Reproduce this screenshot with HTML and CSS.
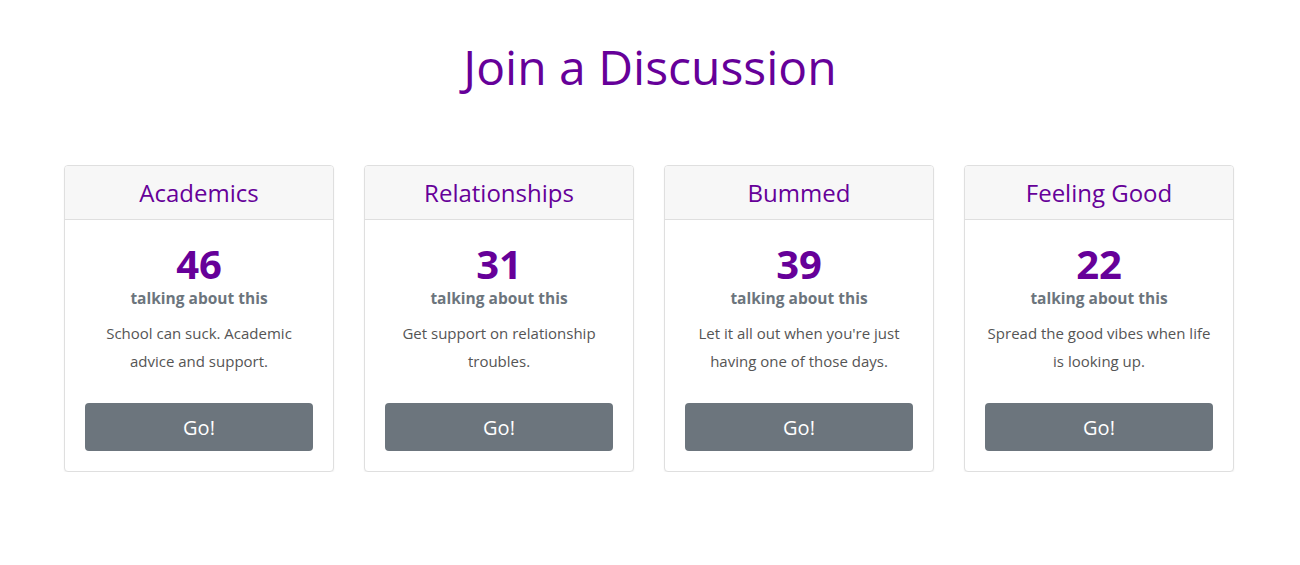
FILE: index.html
```html
<!DOCTYPE html>
<html lang="en">
<head>
<meta charset="utf-8">
<title>Join a Discussion</title>
<link rel="stylesheet" href="styles.css">
</head>
<body>
<main class="page">
  <h1 class="page-title">Join a Discussion</h1>
  <section class="cards">
    <article class="card">
      <header class="card-header"><h2 class="card-title">Academics</h2></header>
      <div class="card-body">
        <div class="count">46</div>
        <div class="count-label">talking about this</div>
        <p class="desc">School can suck. Academic advice and support.</p>
        <button class="btn">Go!</button>
      </div>
    </article>
    <article class="card">
      <header class="card-header"><h2 class="card-title">Relationships</h2></header>
      <div class="card-body">
        <div class="count">31</div>
        <div class="count-label">talking about this</div>
        <p class="desc">Get support on relationship troubles.</p>
        <button class="btn">Go!</button>
      </div>
    </article>
    <article class="card">
      <header class="card-header"><h2 class="card-title">Bummed</h2></header>
      <div class="card-body">
        <div class="count">39</div>
        <div class="count-label">talking about this</div>
        <p class="desc">Let it all out when you're just having one of those days.</p>
        <button class="btn">Go!</button>
      </div>
    </article>
    <article class="card">
      <header class="card-header"><h2 class="card-title">Feeling Good</h2></header>
      <div class="card-body">
        <div class="count">22</div>
        <div class="count-label">talking about this</div>
        <p class="desc">Spread the good vibes when life is looking up.</p>
        <button class="btn">Go!</button>
      </div>
    </article>
  </section>
</main>
</body>
</html>
```

FILE: styles.css
```css
* { box-sizing: border-box; }
html, body { margin: 0; padding: 0; background: #fff; }
body {
  font-family: "Open Sans", "Noto Sans", sans-serif;
  color: #212529;
}
.page {
  padding-top: 38px;
}
.page-title {
  margin: 0;
  text-align: center;
  font-size: 48px;
  line-height: 58px;
  font-weight: 400;
  color: #660099;
}
.cards {
  margin-top: 69px;
  padding-right: 2px;
  display: grid;
  grid-template-columns: repeat(4, 270px);
  column-gap: 30px;
  justify-content: center;
}
.card {
  border: 1px solid #dfdfdf;
  border-radius: 4px;
  background: #fff;
  box-shadow: 0 1px 2px rgba(0,0,0,0.06);
  display: flex;
  flex-direction: column;
  overflow: hidden;
}
.card-header {
  background: #f7f7f7;
  border-bottom: 1px solid #dfdfdf;
  padding: 13px 20px 11px;
  text-align: center;
}
.card-title {
  margin: 0;
  font-size: 24px;
  line-height: 28.8px;
  font-weight: 400;
  color: #660099;
}
.card-body {
  padding: 20px;
  text-align: center;
  display: flex;
  flex-direction: column;
  flex: 1;
}
.count {
  font-size: 40px;
  line-height: 48px;
  font-weight: 700;
  color: #660099;
}
.count-label {
  font-size: 15.5px;
  line-height: 20px;
  font-weight: 700;
  color: #6c757d;
}
.desc {
  margin: 11px 0 28px;
  font-size: 15px;
  line-height: 28px;
  color: #555;
}
.btn {
  margin-top: auto;
  height: 48px;
  width: 100%;
  border: 0;
  border-radius: 4px;
  padding: 2px 0 0;
  background: #6c757d;
  color: #fff;
  font-family: inherit;
  font-size: 20px;
  line-height: 30px;
  cursor: pointer;
}
```
